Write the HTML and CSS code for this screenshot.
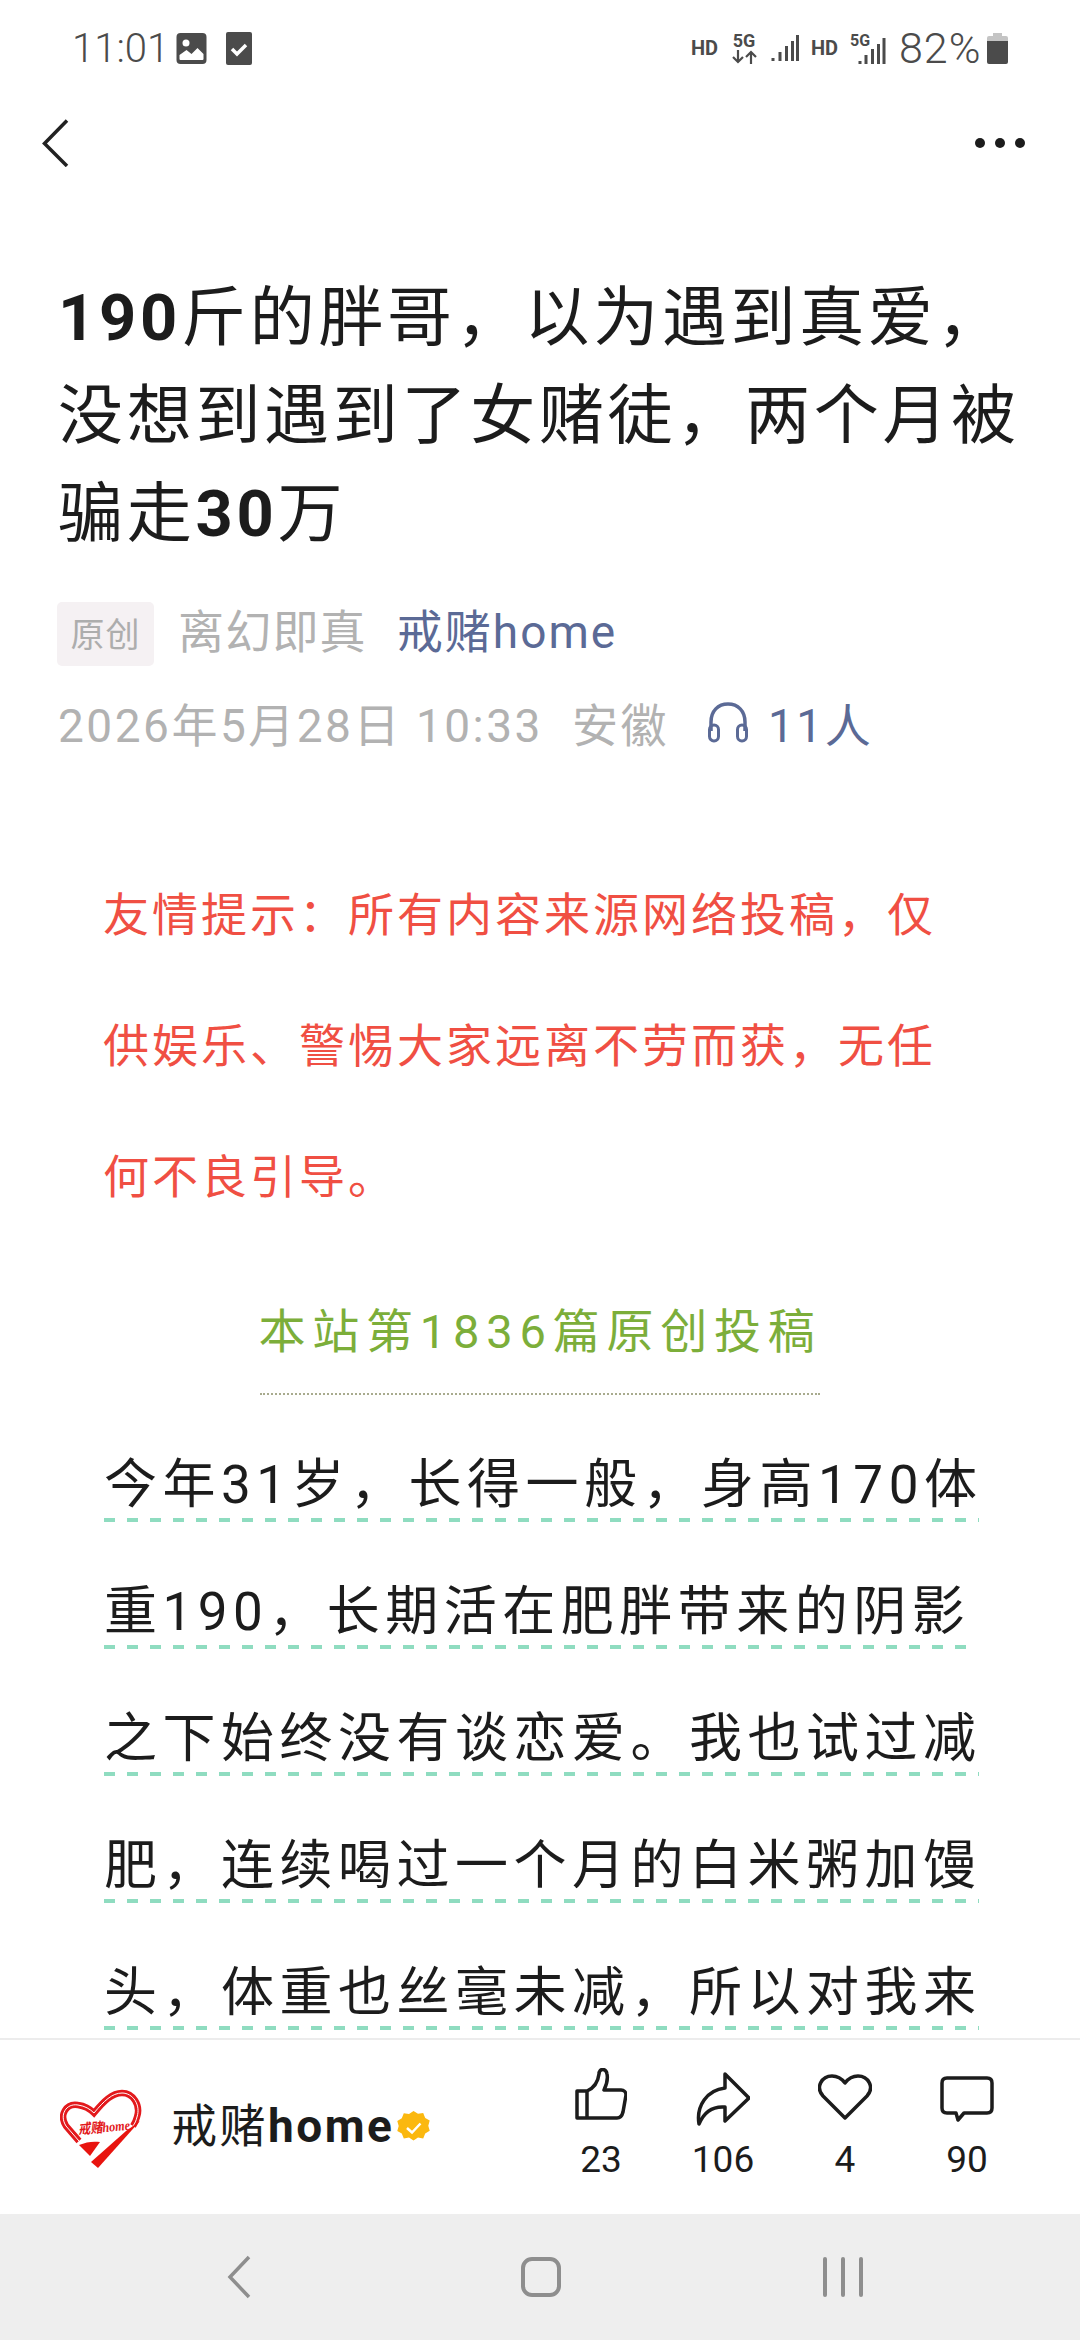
FILE: index.html
```html
<!DOCTYPE html>
<html lang="zh-CN">

<head>
  <title>190斤的胖哥</title>
  <meta charset="utf-8" />
  <meta name="viewport" content="width=device-width, initial-scale=1" />
  <link rel="stylesheet" href="styles.css">
</head>

<body>
  <div class="status">
    <span class="clock">11:01</span>
    <svg class="st-pic" width="31" height="31" viewBox="0 0 30 31">
      <rect width="30" height="31" rx="4" fill="#4b4b4b" />
      <circle cx="9.500" cy="10" r="3.500" fill="#fff" />
      <path d="M3 26v-4l7-5 5 4 6-6 6 6v5q0 1-1 1H4q-1 0-1-1z" fill="#fff" />
    </svg>
    <svg class="st-task" width="26" height="33" viewBox="0 0 26 33">
      <rect width="26" height="33" rx="2" fill="#4b4b4b" />
      <path d="M6 17l5 5 9-9" fill="none" stroke="#fff" stroke-width="3.500" />
    </svg>
    <div class="st-right">
      <span class="st-hd">HD</span>
      <div class="st-net">
        <span>5G</span>
        <svg width="25" height="14" viewBox="0 0 25 14">
          <path d="M6 0v12M1 7l5 5 5-5M19 14V2M14 7l5-5 5 5" fill="none" stroke="#4b4b4b" stroke-width="2.200" />
        </svg>
      </div>
      <svg class="st-bars" width="28" height="28" viewBox="0 0 28 28">
        <path d="M2 24v3M9 18v9M15.500 12v15M21.500 7v20M26.500 1v26" stroke="#4b4b4b" stroke-width="3" />
      </svg>
      <span class="st-hd st-hd2">HD</span>
      <div class="st-sim2">
        <span>5G</span>
        <svg width="28" height="28" viewBox="0 0 28 28">
          <path d="M2 24v3M8 18v9M14.500 12v15M20.500 7v20M26 1v26" stroke="#4b4b4b" stroke-width="3" />
        </svg>
      </div>
      <span class="st-pct">82%</span>
      <svg width="21" height="31" viewBox="0 0 21 31">
        <path d="M6 0h9v3h4q2 0 2 2v6H0V5q0-2 2-2h4z" fill="#c4c4c4" />
        <path d="M0 8h21v21q0 2-2 2H2q-2 0-2-2z" fill="#4b4b4b" />
      </svg>
    </div>
  </div>

  <div class="topnav">
    <svg width="28" height="48" viewBox="0 0 28 48">
      <path d="M25 1.500L2.500 24.500 25 47" fill="none" stroke="#222" stroke-width="3.500" />
    </svg>
    <div class="more"><i></i><i></i><i></i></div>
  </div>

  <main class="article">
    <h1 class="title">
      <span class="title-line"><b>190</b>斤的胖哥，以为遇到真爱，</span>
      <span class="title-line">没想到遇到了女赌徒，两个月被</span>
      <span class="title-line">骗走<b>30</b>万</span>
    </h1>

    <div class="meta">
      <span class="tag">原创</span>
      <span class="author">离幻即真</span>
      <span class="account">戒赌home</span>
    </div>

    <div class="meta2">
      <span class="date">2026年5月28日 10:33</span>
      <span class="place">安徽</span>
      <svg class="phones" width="44" height="42" viewBox="0 0 44 42">
        <path d="M5 30V21C5 10 12 3 22 3s17 7 17 18v9" fill="none" stroke="#5b6a96" stroke-width="3.500" />
        <rect x="3.500" y="24" width="9" height="16" rx="4.500" fill="none" stroke="#5b6a96" stroke-width="3" />
        <rect x="31.500" y="24" width="9" height="16" rx="4.500" fill="none" stroke="#5b6a96" stroke-width="3" />
      </svg>
      <span class="listeners">11人</span>
    </div>

    <div class="notice">
      <p>友情提示：所有内容来源网络投稿，仅</p>
      <p>供娱乐、警惕大家远离不劳而获，无任</p>
      <p>何不良引导。</p>
    </div>

    <div class="source">本站第1836篇原创投稿</div>

    <div class="body-text">
      <span class="line">今年31岁，长得一般，身高170体</span>
      <span class="line">重190，长期活在肥胖带来的阴影</span>
      <span class="line">之下始终没有谈恋爱。我也试过减</span>
      <span class="line">肥，连续喝过一个月的白米粥加馒</span>
      <span class="line">头，体重也丝毫未减，所以对我来</span>
    </div>
  </main>

  <div class="actionbar">
    <svg class="logo" width="82" height="80" viewBox="0 0 82 80">
      <path d="M19 52L6 37C-1 26 6 14 18 16c7 1 12 4 16 8C44 12 52 4 62 4c11 0 19 12 15 24-1 4-2 6-4 9"
        fill="none" stroke="#e3191c" stroke-width="6.500" />
      <path d="M19 52L6 37C-1 26 6 14 18 16c7 1 12 4 16 8C44 12 52 4 62 4c11 0 19 12 15 24-1 4-2 6-4 9"
        fill="none" stroke="#fff" stroke-width="1" />
      <path d="M80 32L38 79l-7-6 35-31z" fill="#e8140f" />
      <path d="M19 56c7-3 14-4 21-3L30 67z" fill="#e8140f" />
      <text class="logo-text" x="18" y="43" textLength="52" lengthAdjust="spacingAndGlyphs" transform="rotate(-5 44 38)">戒赌home</text>
    </svg>
    <div class="brand">戒赌<b>home</b></div>
    <svg class="badge" width="33" height="33" viewBox="0 0 33 33">
      <path d="M16.500 0l4.500 2.800 5.200-.8 2 4.900 4.500 2.700-1.400 5.100 1.400 5.100-4.500 2.700-2 4.900-5.200-.8-4.500 2.800-4.500-2.800-5.200.8-2-4.900L.3 20.100l1.400-5.100L.3 9.900l4.500-2.700 2-4.900 5.200.8z"
        fill="#fbb80f" />
      <path d="M10 17l5 4.500 8.500-9" fill="none" stroke="#fff" stroke-width="2.500" />
    </svg>
    <div class="actions">
      <div class="action">
        <svg width="52" height="52" viewBox="0 0 52 52">
          <path d="M2 23h10v27H2zM12 23c7-3 11-9 12-17 0-6 7-6 8 0 1 5-1 12-3 16h17c3 0 5 2 5 5l-3 17c-1 4-3 6-6 6H12"
            fill="none" stroke="#1c1c1c" stroke-width="3.500" stroke-linejoin="round" />
        </svg>
        <span>23</span>
      </div>
      <div class="action action-share">
        <svg width="54" height="54" viewBox="0 0 54 54">
          <path d="M29 2l24 24-24 23V35C17 34 8 40 3 52 0 34 11 18 29 16z" fill="none" stroke="#1c1c1c" stroke-width="3.500"
            stroke-linejoin="round" />
        </svg>
        <span>106</span>
      </div>
      <div class="action action-fav">
        <svg width="54" height="46" viewBox="0 0 54 46">
          <path d="M27 44L5 22C-3 13 4 2 14 2c6 0 10 3 13 7 3-4 7-7 13-7 10 0 17 11 9 20z" fill="none" stroke="#1c1c1c"
            stroke-width="3.500" stroke-linejoin="round" />
        </svg>
        <span>4</span>
      </div>
      <div class="action action-comment">
        <svg width="54" height="46" viewBox="0 0 54 46">
          <path d="M7 2h40q5 0 5 5v25q0 5-5 5H24l-6 7-2-7H7q-5 0-5-5V7q0-5 5-5z" fill="none" stroke="#1c1c1c"
            stroke-width="3.500" stroke-linejoin="round" />
        </svg>
        <span>90</span>
      </div>
    </div>
  </div>

  <div class="sysnav">
    <svg width="24" height="44" viewBox="0 0 24 44">
      <path d="M22 2L3 22l19 20" fill="none" stroke="#8e8e8e" stroke-width="3.500" />
    </svg>
    <div class="sys-home"></div>
    <div class="sys-recent"><i></i><i></i><i></i></div>
  </div>
</body>

</html>
```

FILE: styles.css
```css
* {
  box-sizing: border-box;
}

html,
body {
  margin: 0;
  padding: 0;
}

body {
  width: 1080px;
  height: 2340px;
  display: flex;
  flex-direction: column;
  overflow: hidden;
  background: #fff;
  color: #1c1c1c;
  font-family: Roboto, "Noto Sans CJK SC", sans-serif;
}

/* status bar */
.status {
  height: 96px;
  flex: none;
  display: flex;
  align-items: center;
  padding-left: 72px;
  color: #4b4b4b;
}

.clock {
  font-size: 40px;
  font-weight: 300;
  width: 104px;
}

.st-task {
  margin-left: 19px;
}

.st-right {
  margin-left: auto;
  margin-right: 72px;
  display: flex;
  align-items: center;
}

.st-hd {
  font-size: 20px;
  font-weight: 700;
  width: 41px;
}

.st-net {
  display: flex;
  flex-direction: column;
  align-items: center;
  width: 24px;
  margin-right: 15px;
  font-size: 18px;
  font-weight: 700;
  line-height: 18px;
}

.st-hd2 {
  margin-left: 12px;
  width: 39px;
}

.st-sim2 {
  display: flex;
  align-items: flex-end;
  width: 36px;
  height: 34px;
  font-size: 16px;
  font-weight: 700;
  line-height: 20px;
}

.st-sim2 span {
  align-self: flex-start;
  width: 8px;
  white-space: nowrap;
}

.st-pct {
  font-size: 43px;
  font-weight: 300;
  letter-spacing: 1px;
  width: 88px;
  margin-left: 13px;
}

/* top nav */
.topnav {
  height: 94px;
  flex: none;
  display: flex;
  align-items: center;
  justify-content: space-between;
  padding: 0 55px 0 42px;
}

.more {
  display: flex;
  gap: 10px;
}

.more i {
  width: 10px;
  height: 10px;
  border-radius: 50%;
  background: #1c1c1c;
}

/* article */
.article {
  flex: 1;
  min-height: 0;
  overflow: hidden;
  border-bottom: 2px solid #ececec;
}

.title {
  margin: 79px 0 0;
  padding-left: 58px;
  font-size: 65px;
  font-weight: 400;
  letter-spacing: 3.700px;
  line-height: 98px;
}

.title-line {
  display: block;
  white-space: nowrap;
}

.title b {
  font-weight: 700;
}

.meta {
  margin-top: 39px;
  padding-left: 57px;
  display: flex;
  align-items: center;
  height: 64px;
  font-size: 46px;
  letter-spacing: 1.200px;
}

.tag {
  width: 97px;
  height: 64px;
  padding-bottom: 4px;
  border-radius: 5px;
  background: #f5f1f3;
  color: #adadad;
  font-size: 34px;
  letter-spacing: 1px;
  display: flex;
  align-items: center;
  justify-content: center;
}

.author {
  margin-left: 24px;
  padding-bottom: 12px;
  color: #b2b2b2;
}

.account {
  margin-left: 30px;
  padding-bottom: 12px;
  letter-spacing: 2px;
  color: #5b6a96;
}

.meta2 {
  margin-top: 24px;
  padding-left: 58px;
  display: flex;
  align-items: center;
  height: 64px;
  font-size: 46px;
  letter-spacing: 2.500px;
  color: #b2b2b2;
}

.place {
  margin-left: 29px;
}

.phones {
  margin-left: 37px;
}

.listeners {
  margin-left: 18px;
  color: #5b6a96;
}

.notice {
  margin-top: 96px;
  padding-left: 103px;
  color: #f04f43;
  font-size: 46px;
  letter-spacing: 3px;
}

.notice p {
  margin: 0;
  height: 131px;
  line-height: 131px;
  white-space: nowrap;
}

.source {
  width: 560px;
  margin: 42px 0 0 260px;
  height: 110px;
  padding-bottom: 24px;
  display: flex;
  align-items: center;
  justify-content: center;
  border-bottom: 2px dotted #a8ab8e;
  color: #7cae3a;
  font-size: 47px;
  letter-spacing: 6.800px;
  white-space: nowrap;
}

.body-text {
  margin-top: 32px;
  padding-left: 104px;
  font-size: 53px;
  letter-spacing: 5.500px;
  line-height: 116px;
}

.line {
  display: block;
  width: fit-content;
  height: 127px;
  white-space: nowrap;
  background: repeating-linear-gradient(90deg, #8fdcc0 0 11px, transparent 11px 23px) 0 91px / calc(100% - 3px) 4px no-repeat;
}

/* bottom action bar */
.actionbar {
  height: 174px;
  flex: none;
  display: flex;
  align-items: center;
  padding-left: 60px;
}

.logo {
  margin-top: 3px;
}

.logo-text {
  font-family: "Liberation Serif", "Noto Sans CJK SC", serif;
  font-style: italic;
  font-weight: 700;
  font-size: 14px;
  fill: #e3191c;
}

.brand {
  margin-left: 29px;
  padding-bottom: 10px;
  font-size: 46px;
  letter-spacing: 2.500px;
  white-space: nowrap;
}

.brand b {
  font-weight: 700;
}

.badge {
  margin-left: 3px;
}

.actions {
  margin-left: auto;
  margin-right: 52px;
  align-self: flex-start;
  margin-top: 28px;
  display: grid;
  grid-template-columns: repeat(4, 122px);
}

.action {
  height: 112px;
  display: flex;
  flex-direction: column;
  align-items: center;
  justify-content: space-between;
  font-size: 37px;
  line-height: 40px;
}

.action-share {
  padding-top: 4px;
}

.action-fav {
  padding-top: 6px;
}

.action-comment {
  padding-top: 8px;
}

/* android nav */
.sysnav {
  height: 126px;
  flex: none;
  background: #eee;
  display: grid;
  grid-template-columns: repeat(3, 302px);
  align-items: center;
  justify-items: center;
  padding-left: 88px;
}

.sys-home {
  width: 40px;
  height: 40px;
  border: 4px solid #8e8e8e;
  border-radius: 11px;
}

.sys-recent {
  display: flex;
  gap: 14px;
}

.sys-recent i {
  width: 4px;
  height: 40px;
  border-radius: 2px;
  background: #8e8e8e;
}
```
